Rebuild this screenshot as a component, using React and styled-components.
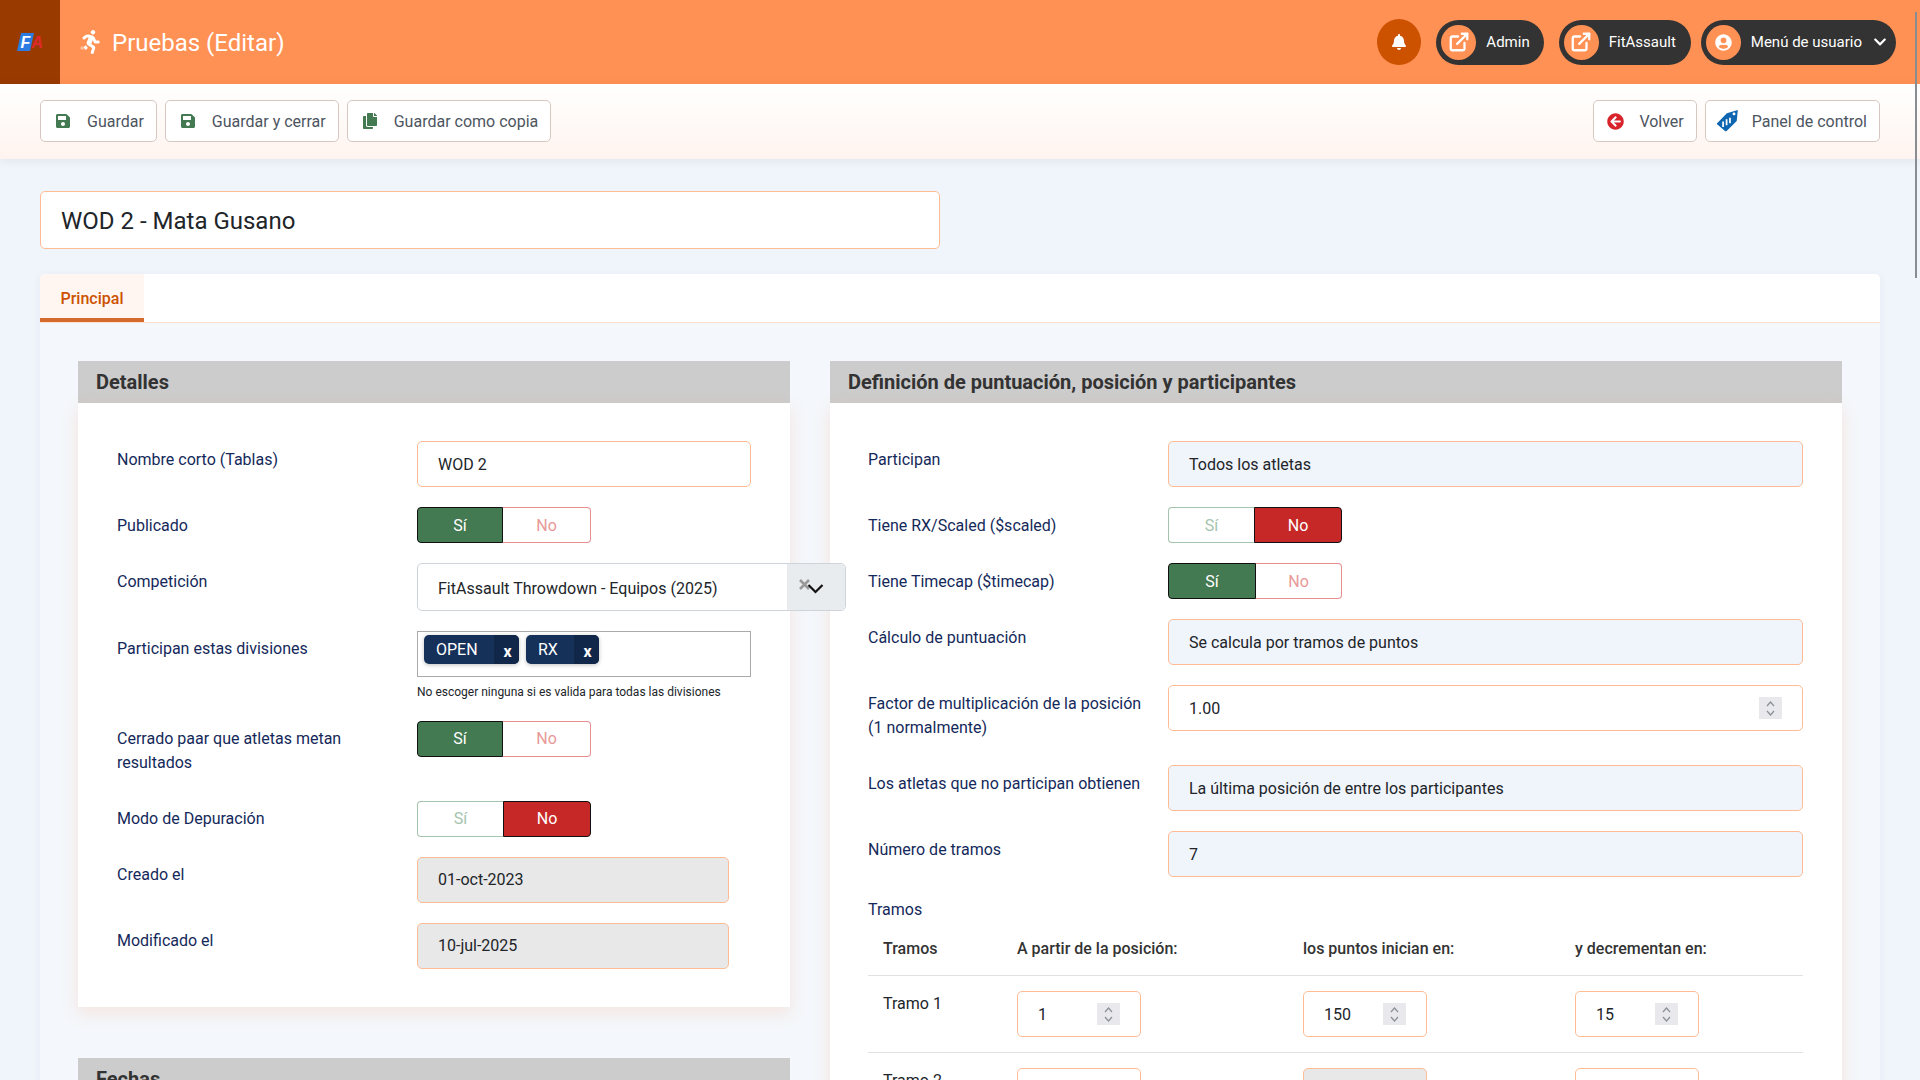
import React from "react";
import styled, { createGlobalStyle } from "styled-components";
import { FaBell, FaChevronDown, FaCopy, FaRunning, FaSave, FaUserCircle, FaArrowCircleLeft } from "react-icons/fa";
import { ExternalLink } from "lucide-react";

const Global = createGlobalStyle`
  * { box-sizing: border-box; }
  html, body { margin: 0; height: 100%; overflow: hidden; }
  body { font-family: Roboto, "Liberation Sans", sans-serif; font-size: 16px; line-height: 24px; color: #212529; background: #f0f4fb; }
`;

const Page = styled.div`
  height: 100vh;
  overflow-y: auto;
  overflow-x: hidden;
  scrollbar-width: none;
  background: #f0f4fb;
  &::-webkit-scrollbar { display: none; }
`;
const ScrollThumb = styled.div`
  position: fixed;
  top: 12px;
  right: 3px;
  width: 2px;
  height: 266px;
  background: #888d92;
  z-index: 20;
`;
const TopBar = styled.header`
  height: 84px;
  display: flex;
  align-items: center;
  background: #ff9155;
  color: #fff;
`;
const LogoBox = styled.div`
  width: 60px;
  height: 84px;
  background: #993a00;
  display: flex;
  align-items: center;
  justify-content: center;
  flex: none;
`;
const PageTitle = styled.h1`
  margin: 0 0 0 18px;
  display: flex;
  align-items: center;
  gap: 10px;
  font-size: 24px;
  font-weight: 400;
  line-height: 32px;
  flex: 1;
`;
const TitleText = styled.span`
  padding-top: 2px;
`;
const TopActions = styled.div`
  display: flex;
  align-items: center;
  gap: 15px;
  padding-right: 24px;
`;
const BellButton = styled.div`
  width: 44px;
  height: 46px;
  border-radius: 50%;
  background: #cc5200;
  display: flex;
  align-items: center;
  justify-content: center;
`;
const Pill = styled.div`
  height: 45px;
  border-radius: 23px;
  background: #333;
  display: flex;
  align-items: center;
  padding: 0 ${(p) => p.$pr || 15}px 0 5px;
  gap: 10px;
  font-size: 15px;
  margin-left: ${(p) => p.$ml || 0}px;
`;
const PillIcon = styled.span`
  width: 35px;
  height: 35px;
  border-radius: 50%;
  background: #ff9155;
  display: flex;
  align-items: center;
  justify-content: center;
  flex: none;
`;
const PillChevron = styled(FaChevronDown)`
  margin-left: 1px;
  color: #fff;
`;
const Toolbar = styled.div`
  height: 75px;
  padding: 16px 40px 0;
  display: flex;
  justify-content: space-between;
  background: linear-gradient(#fff, #fff4ef);
  box-shadow: 0 2px 10px rgba(0, 0, 0, 0.07);
  position: relative;
`;
const ToolGroup = styled.div`
  display: flex;
  gap: 8px;
  height: 42px;
`;
const ToolButton = styled.div`
  display: flex;
  align-items: center;
  height: 42px;
  padding: 2px 12px 0 ${(p) => p.$pl || 10}px;
  gap: 12px;
  background: #fff;
  border: 1px solid #d6c8c1;
  border-radius: 5px;
  color: #4d5561;
`;
const IconSlot = styled.span`
  width: 24px;
  display: flex;
  justify-content: center;
  margin-top: -2px;
  color: ${(p) => p.$color};
`;
const Main = styled.main`
  padding: 32px 40px 0;
`;
const TitleField = styled.div`
  width: 900px;
  height: 58px;
  border: 1px solid #ffbb94;
  border-radius: 5px;
  background: #fff;
  font-size: 24px;
  line-height: 58px;
  padding-left: 20px;
`;
const TabCard = styled.section`
  margin-top: 25px;
  border-radius: 5px 5px 0 0;
  overflow: hidden;
  background: #f4f7fb;
  box-shadow: 0 2px 10px rgba(60, 80, 120, 0.06);
`;
const TabBar = styled.div`
  height: 49px;
  background: #fff;
  border-bottom: 1px solid #ffe2d1;
`;
const Tab = styled.div`
  width: 104px;
  height: 48px;
  background: #fff6f1;
  border-bottom: 4px solid #d56a2e;
  color: #cc5200;
  font-weight: 500;
  text-align: center;
  line-height: 49px;
`;
const Columns = styled.div`
  display: grid;
  grid-template-columns: 712px 1012px;
  gap: 40px;
  padding: 38px;
  align-items: start;
`;
const Column = styled.div`
  display: flex;
  flex-direction: column;
  gap: 51px;
`;
const PanelHead = styled.h2`
  margin: 0;
  height: 42px;
  background: #ccc;
  color: #333;
  font-size: 20px;
  font-weight: 700;
  line-height: 42px;
  padding-left: 18px;
`;
const PanelBody = styled.div`
  background: #fff;
  padding: 38px 39px 38px ${(p) => p.$pl}px;
  display: flex;
  flex-direction: column;
  gap: 20px;
  box-shadow: 0 6px 16px rgba(255, 150, 100, 0.18);
`;
const FormRow = styled.div`
  display: grid;
  grid-template-columns: 300px 1fr;
  align-items: start;
`;
const Label = styled.div`
  padding: ${(p) => (p.$high ? "6px 20px 6px 0" : "7px 20px 5px 0")};
  color: #14295a;
`;
const StandaloneLabel = styled.div`
  color: #14295a;
  margin: 1px 0 -21px;
`;
const Field = styled.div`
  height: 46px;
  width: ${(p) => (p.$w ? `${p.$w}px` : "auto")};
  border: 1px solid #ffbb94;
  border-radius: 5px;
  background: ${(p) => p.$bg || "#fff"};
  padding: ${(p) => (p.$high ? 0 : 2)}px 20px 0;
  display: flex;
  align-items: center;
  justify-content: space-between;
`;
const Spinner = styled.span`
  width: 23px;
  height: 22px;
  margin-top: -2px;
  background: #e8e8ed;
  display: flex;
  flex-direction: column;
  align-items: center;
  justify-content: center;
  gap: 3px;
  flex: none;
`;
const Toggle = styled.div`
  display: flex;
  width: 174px;
  height: 36px;
`;
const ToggleSide = styled.div`
  width: ${(p) => (p.$first ? `${p.$w}px` : "auto")};
  flex: ${(p) => (p.$first ? "none" : "1")};
  padding-top: ${(p) => (p.$high ? 0 : 1)}px;
  display: flex;
  align-items: center;
  justify-content: center;
  border-style: solid;
  border-width: 1px;
  border-radius: ${(p) => (p.$first ? "4px 0 0 4px" : "0 4px 4px 0")};
  ${(p) => (p.$first ? "border-right-width: 0;" : "border-left-width: 0;")}
  ${(p) =>
    p.$on
      ? `background: ${p.$first ? "#447a52" : "#c62828"}; color: #fff; border-color: #111; border-width: 1px;`
      : `background: #fff; color: ${p.$first ? "#a5c4ad" : "#e89898"}; border-color: ${p.$first ? "#a5c4ad" : "#e68f8f"};`}
`;
const SelectBox = styled.div`
  width: 429px;
  height: 48px;
  border: 1px solid #ced4da;
  border-radius: 5px;
  background: #fff;
  display: flex;
  align-items: center;
  justify-content: space-between;
  padding-left: 20px;
  position: relative;
  overflow: hidden;
`;
const SelectText = styled.span`
  padding-top: 4px;
`;
const SelectArrow = styled.span`
  width: 58px;
  height: 100%;
  background: #e9ecef;
  flex: none;
  display: block;
`;
const SelectMarksSvg = styled.svg`
  position: absolute;
  right: 20px;
  top: 13px;
`;
const ChipBox = styled.div`
  width: 334px;
  height: 46px;
  border: 1px solid #aaa;
  background: #fff;
  padding: 3px 6px;
  display: flex;
  gap: 7px;
  align-items: flex-start;
`;
const Chip = styled.div`
  height: 29px;
  border-radius: 5px;
  background: #153059;
  color: #fff;
  display: flex;
  overflow: hidden;
  box-shadow: 0 1px 4px rgba(0, 0, 0, 0.25);
  line-height: 29px;
`;
const ChipText = styled.span`
  width: ${(p) => p.$w}px;
  padding-left: 12px;
`;
const ChipClose = styled.span`
  width: 25px;
  padding-left: 2px;
  background: #10274a;
  text-align: center;
  font-weight: 700;
  font-size: 16px;
  line-height: 34px;
`;
const Help = styled.div`
  margin-top: 6px;
  font-size: 12px;
  line-height: 18px;
`;
const TramoRow = styled.div`
  display: grid;
  grid-template-columns: 134px 286px 272px 1fr;
  padding: ${(p) => (p.$head ? "16px 0 14px 15px" : "15px 0 15px 15px")};
  border-bottom: 1px solid #dfe1e5;
  font-weight: ${(p) => (p.$head ? 500 : 400)};
  color: ${(p) => (p.$head ? "#333" : "#212529")};
`;
const TramoName = styled.span`
  padding-top: 1px;
`;

const Logo = () => (
  <svg width="26" height="18" viewBox="0 0 26 18">
    <polygon points="4,0 17,0 13,18 0,18" fill="#2b7be0" />
    <text x="3.5" y="15" fontFamily="Liberation Sans, sans-serif" fontStyle="italic" fontWeight="700" fontSize="16" fill="#fff">F</text>
    <text x="14.5" y="15" fontFamily="Liberation Sans, sans-serif" fontStyle="italic" fontWeight="700" fontSize="16" fill="#e0282e">A</text>
  </svg>
);
const RunIcon = () => (
  <>
    <svg width="0" height="0" style={{ position: "absolute" }}>
      <defs>
        <linearGradient id="runDuo" x1="0" y1="1" x2="1" y2="0.35">
          <stop offset="0.27" stopColor="#fff" stopOpacity="0.4" />
          <stop offset="0.27" stopColor="#fff" />
        </linearGradient>
      </defs>
    </svg>
    <FaRunning size={24} style={{ fill: "url(#runDuo)" }} />
  </>
);
const TagIcon = () => (
  <svg width="24" height="24" viewBox="0 0 22 22">
    <path d="M1 13 L10 4 L20 1 L19 11 L10 20 Q9 21 8 20 L1 14 Q0.5 13.5 1 13Z" fill="#0f66b0" />
    <circle cx="16.5" cy="4.5" r="1.3" fill="#fff" />
    <path d="M6.5 11.5v5M9.7 9.5v5.5M12.8 8v5" stroke="#fff" strokeWidth="1.6" fill="none" />
  </svg>
);
const SpinChevron = ({ up }) => (
  <svg width="9" height="6" viewBox="0 0 9 6">
    <path d={up ? "M1 5l3.5-4L8 5" : "M1 1l3.5 4L8 1"} stroke="#8a8f96" strokeWidth="1.2" fill="none" />
  </svg>
);
const NumberField = ({ value, w, bg }) => (
  <Field $w={w} $bg={bg}>
    <span>{value}</span>
    <Spinner>
      <SpinChevron up />
      <SpinChevron />
    </Spinner>
  </Field>
);
const YesNo = ({ yes, split = 86, high }) => (
  <Toggle>
    <ToggleSide $first $w={split} $on={yes} $high={high}>Sí</ToggleSide>
    <ToggleSide $on={!yes} $high={high}>No</ToggleSide>
  </Toggle>
);

const SelectMarks = () => (
  <SelectMarksSvg width="26" height="20" viewBox="0 0 26 20">
    <path d="M1 3l9 9M10 3l-9 9" stroke="#999" strokeWidth="2.6" fill="none" />
    <path d="M9.5 8l7 7 7-7" stroke="#111" strokeWidth="2.2" fill="none" />
  </SelectMarksSvg>
);

export default function App() {
  return (
    <Page>
      <Global />
      <ScrollThumb />
      <TopBar>
        <LogoBox><Logo /></LogoBox>
        <PageTitle><RunIcon /><TitleText>Pruebas (Editar)</TitleText></PageTitle>
        <TopActions>
          <BellButton><FaBell size={16} color="#fff" /></BellButton>
          <Pill $pr={14}><PillIcon><ExternalLink size={22} strokeWidth={2.5} color="#fff" /></PillIcon>Admin</Pill>
          <Pill><PillIcon><ExternalLink size={22} strokeWidth={2.5} color="#fff" /></PillIcon>FitAssault</Pill>
          <Pill $pr={9} $ml={-5}>
            <PillIcon><FaUserCircle size={17} color="#fff" /></PillIcon>
            Menú de usuario
            <PillChevron size={14} />
          </Pill>
        </TopActions>
      </TopBar>
      <Toolbar>
        <ToolGroup>
          <ToolButton><IconSlot $color="#447a52"><FaSave size={16} /></IconSlot>Guardar</ToolButton>
          <ToolButton><IconSlot $color="#447a52"><FaSave size={16} /></IconSlot>Guardar y cerrar</ToolButton>
          <ToolButton><IconSlot $color="#447a52"><FaCopy size={16} /></IconSlot>Guardar como copia</ToolButton>
        </ToolGroup>
        <ToolGroup>
          <ToolButton $pl={9}><IconSlot $color="#d8232a"><FaArrowCircleLeft size={17} /></IconSlot>Volver</ToolButton>
          <ToolButton><IconSlot><TagIcon /></IconSlot>Panel de control</ToolButton>
        </ToolGroup>
      </Toolbar>
      <Main>
        <TitleField>WOD 2 - Mata Gusano</TitleField>
        <TabCard>
          <TabBar><Tab>Principal</Tab></TabBar>
          <Columns>
            <Column>
              <div>
                <PanelHead>Detalles</PanelHead>
                <PanelBody $pl={39}>
                  <FormRow><Label>Nombre corto (Tablas)</Label><Field>WOD 2</Field></FormRow>
                  <FormRow><Label>Publicado</Label><YesNo yes /></FormRow>
                  <FormRow>
                    <Label>Competición</Label>
                    <SelectBox>
                      <SelectText>FitAssault Throwdown - Equipos (2025)</SelectText>
                      <SelectArrow />
                      <SelectMarks />
                    </SelectBox>
                  </FormRow>
                  <FormRow>
                    <Label $high>Participan estas divisiones</Label>
                    <div>
                      <ChipBox>
                        <Chip><ChipText $w={70}>OPEN</ChipText><ChipClose>x</ChipClose></Chip>
                        <Chip><ChipText $w={48}>RX</ChipText><ChipClose>x</ChipClose></Chip>
                      </ChipBox>
                      <Help>No escoger ninguna si es valida para todas las divisiones</Help>
                    </div>
                  </FormRow>
                  <FormRow><Label $high>Cerrado paar que atletas metan resultados</Label><YesNo yes high /></FormRow>
                  <FormRow><Label $high>Modo de Depuración</Label><YesNo high /></FormRow>
                  <FormRow><Label $high>Creado el</Label><Field $w={312} $bg="#e8e8e8" $high>01-oct-2023</Field></FormRow>
                  <FormRow><Label $high>Modificado el</Label><Field $w={312} $bg="#e8e8e8" $high>10-jul-2025</Field></FormRow>
                </PanelBody>
              </div>
              <div>
                <PanelHead>Fechas</PanelHead>
              </div>
            </Column>
            <Column>
              <div>
                <PanelHead>Definición de puntuación, posición y participantes</PanelHead>
                <PanelBody $pl={38}>
                  <FormRow><Label>Participan</Label><Field $bg="#f0f4fb">Todos los atletas</Field></FormRow>
                  <FormRow><Label>Tiene RX/Scaled ($scaled)</Label><YesNo /></FormRow>
                  <FormRow><Label>Tiene Timecap ($timecap)</Label><YesNo yes split={88} /></FormRow>
                  <FormRow><Label>Cálculo de puntuación</Label><Field $bg="#f0f4fb">Se calcula por tramos de puntos</Field></FormRow>
                  <FormRow><Label>Factor de multiplicación de la posición (1 normalmente)</Label><NumberField value="1.00" /></FormRow>
                  <FormRow><Label>Los atletas que no participan obtienen</Label><Field $bg="#f0f4fb">La última posición de entre los participantes</Field></FormRow>
                  <FormRow><Label>Número de tramos</Label><Field $bg="#f0f4fb">7</Field></FormRow>
                  <StandaloneLabel>Tramos</StandaloneLabel>
                  <div>
                    <TramoRow $head>
                      <span>Tramos</span>
                      <span>A partir de la posición:</span>
                      <span>los puntos inician en:</span>
                      <span>y decrementan en:</span>
                    </TramoRow>
                    <TramoRow>
                      <TramoName>Tramo 1</TramoName>
                      <NumberField value="1" w={124} />
                      <NumberField value="150" w={124} />
                      <NumberField value="15" w={124} />
                    </TramoRow>
                    <TramoRow>
                      <TramoName>Tramo 2</TramoName>
                      <Field $w={124} />
                      <Field $w={124} $bg="#e8e8e8" />
                      <Field $w={124} />
                    </TramoRow>
                  </div>
                </PanelBody>
              </div>
            </Column>
          </Columns>
        </TabCard>
      </Main>
    </Page>
  );
}
